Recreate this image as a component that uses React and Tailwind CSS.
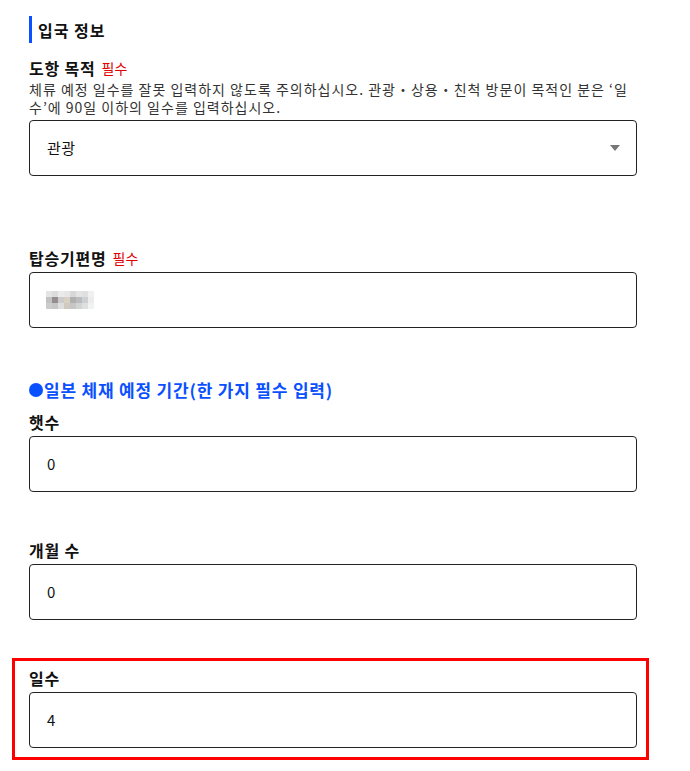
const mosaic = [
  ['#e4e4e4', '#dcdcdc', '#ebebeb', '#e6e6e6', '#d8d8d8', '#e4e4e4', '#e0e0e0', '#f0f0f0'],
  ['#c2c2c2', '#968e8e', '#cbcbcb', '#d6d1c3', '#b0b0b0', '#bcbcbc', '#cdd0d2', '#ececec'],
  ['#cccccc', '#c6c6c6', '#dcdee0', '#d0c9be', '#c6c6c6', '#d2d4d4', '#dee0e0', '#f2f2f2'],
];

function Label({ children, required }) {
  return (
    <div className="h-5 flex items-center text-[16px] font-bold text-[#111] leading-5 tracking-[0.8px]">
      <span>{children}</span>
      {required && <span className="ml-[6px] text-[14px] font-normal tracking-normal text-[#e00000]">필수</span>}
    </div>
  );
}

function TextBox({ children }) {
  return (
    <div className="mt-1 h-14 w-[608px] border border-[#222] rounded-[4px] flex items-center pl-[17px] text-[15px] text-[#111]">
      {children}
    </div>
  );
}

export default function App() {
  return (
    <div className="min-h-screen bg-white pl-[29px] pt-4 font-['Noto_Sans_CJK_KR','Noto_Sans',sans-serif]">
      {/* section title */}
      <h2 className="h-[27px] border-l-[3px] border-[#0a50ff] pl-[6px] flex items-center text-[16px] font-bold tracking-[1px] text-[#111]">
        입국 정보
      </h2>

      {/* 도항 목적 */}
      <div className="mt-[15px] w-[608px]">
        <Label required>도항 목적</Label>
        <p className="mt-[2px] text-[14px] leading-[18px] text-[#333] tracking-[1px] whitespace-nowrap">
          체류 예정 일수를 잘못 입력하지 않도록 주의하십시오. 관광・상용・친척 방문이 목적인 분은 ‘일
          <br />
          수’에 90일 이하의 일수를 입력하십시오.
        </p>
        <div className="mt-1 h-14 w-[608px] border border-[#222] rounded-[4px] flex items-center justify-between pl-[17px] pr-[16px] text-[15px] tracking-[0.5px] text-[#111]">
          <span>관광</span>
          <svg width="10" height="6" viewBox="0 0 10 6">
            <path d="M0 0h10L5 6z" fill="#777" />
          </svg>
        </div>
      </div>

      {/* 탑승기편명 */}
      <div className="mt-[72px]">
        <Label required>탑승기편명</Label>
        <TextBox>
          <div className="grid grid-cols-8 -ml-[1px]">
            {mosaic.flat().map((c, i) => (
              <div key={i} className="w-[6px] h-[6px]" style={{ backgroundColor: c }} />
            ))}
          </div>
        </TextBox>
      </div>

      {/* 체재 기간 */}
      <div className="mt-[52px] h-5 flex items-center text-[17px] font-bold tracking-[0.8px] text-[#0a50ff]">
        <span className="w-[14px] h-[14px] rounded-full bg-[#0a50ff] mr-[1px]" />
        <span>일본 체재 예정 기간(한 가지 필수 입력)</span>
      </div>

      <div className="mt-3">
        <Label>햇수</Label>
        <TextBox>0</TextBox>
      </div>

      <div className="mt-12">
        <Label>개월 수</Label>
        <TextBox>0</TextBox>
      </div>

      <div className="mt-[38px] -ml-[17px] w-[637px] border-[3px] border-[#ff0000] pt-[7px] pl-[14px] pr-[9px] pb-[9px]">
        <Label>일수</Label>
        <TextBox>4</TextBox>
      </div>
    </div>
  );
}
